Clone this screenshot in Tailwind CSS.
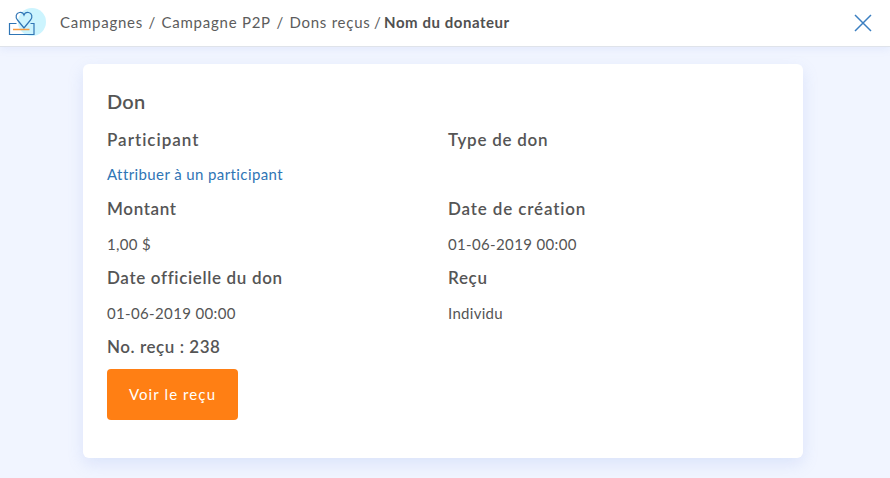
<!DOCTYPE html>
<html lang="fr">
  <head>
    <meta charset="UTF-8" />
    <script src="https://cdn.jsdelivr.net/npm/@tailwindcss/browser@4"></script>
    <title>Don</title>
  </head>
  <body class="bg-[#f1f5ff] h-[478px] w-[890px] overflow-hidden text-[#555555] font-['Lato',sans-serif]">
    <!-- Top bar -->
    <header class="h-[47px] bg-white border-b border-[#dfe3ea] shadow-[0_2px_8px_rgba(120,150,230,0.12)] flex items-center pl-[8px] pr-[18px]">
      <svg width="40" height="30" viewBox="8 8 40 30" fill="none">
        <circle cx="32" cy="22" r="14" fill="#ccf4fe" />
        <path d="M16.500 23.500 H9.500 V34.500 H34 V23.500 H30.500" stroke="#2f75b5" stroke-width="1.200" />
        <path d="M24 28 L17.500 20 C15 17 16 13 19.500 12.500 C21.500 12.200 23.300 13 24 15 C24.700 13 26.500 12.200 28.500 12.500 C32 13 33 17 30.500 20 Z" stroke="#2f75b5" stroke-width="1.200" />
        <path d="M13 29.500 H29.500" stroke="#f79a3e" stroke-width="1.500" />
      </svg>
      <nav class="ml-[12px] mt-[-2px] flex items-center gap-[5.500px] text-[15px] tracking-[0.75px] text-[#5c5c5c]">
        <span>Campagnes</span>
        <span>/</span>
        <span>Campagne P2P</span>
        <span>/</span>
        <span>Dons reçus</span>
        <span class="ml-[-2px]">/</span>
        <span class="font-bold text-[#505050] tracking-[0.55px] ml-[-3px]">Nom du donateur</span>
      </nav>
      <button class="ml-auto">
        <svg width="18" height="18" viewBox="0 0 18 18" fill="none" class="block">
          <path d="M1 1 L17 17 M17 1 L1 17" stroke="#3b7fc1" stroke-width="1.500" />
        </svg>
      </button>
    </header>

    <!-- Card -->
    <main class="mt-[17px] ml-[83px] w-[720px] h-[394px] bg-white rounded-[6px] shadow-[0_6px_16px_rgba(120,150,230,0.18)] px-[24px] pt-[25px]">
      <h1 class="text-[20px] font-semibold tracking-[0.2px] leading-[24px]">Don</h1>
      <div class="grid grid-cols-[341px_1fr] mt-[15px]">
        <div>
          <h2 class="text-[17px] font-semibold tracking-[1px] leading-[24px]">Participant</h2>
          <a class="block text-[15px] tracking-[0.4px] leading-[20px] mt-[12px] text-[#2f75b5]">Attribuer à un participant</a>
        </div>
        <div>
          <h2 class="text-[17px] font-semibold tracking-[0.75px] leading-[24px]">Type de don</h2>
        </div>
        <div class="mt-[13px]">
          <h2 class="text-[17px] font-semibold tracking-[0.65px] leading-[24px]">Montant</h2>
          <p class="text-[15px] tracking-[0.35px] leading-[20px] mt-[13px]">1,00 $</p>
        </div>
        <div class="mt-[13px]">
          <h2 class="text-[17px] font-semibold tracking-[0.85px] leading-[24px]">Date de création</h2>
          <p class="text-[15px] tracking-[0.35px] leading-[20px] mt-[13px]">01-06-2019 00:00</p>
        </div>
        <div class="mt-[12px]">
          <h2 class="text-[17px] font-semibold tracking-[0.65px] leading-[24px]">Date officielle du don</h2>
          <p class="text-[15px] tracking-[0.35px] leading-[20px] mt-[13px]">01-06-2019 00:00</p>
        </div>
        <div class="mt-[12px]">
          <h2 class="text-[17px] font-semibold tracking-[0.65px] leading-[24px]">Reçu</h2>
          <p class="text-[15px] tracking-[0.3px] leading-[20px] mt-[13px]">Individu</p>
        </div>
      </div>
      <p class="text-[17px] font-semibold tracking-[0.55px] leading-[24px] mt-[12px]">No. reçu : 238</p>
      <button class="block mt-[10px] w-[131px] h-[51px] bg-[#ff7f14] rounded-[4px] text-white text-[15px] tracking-[1.100px]">Voir le reçu</button>
    </main>
  </body>
</html>
